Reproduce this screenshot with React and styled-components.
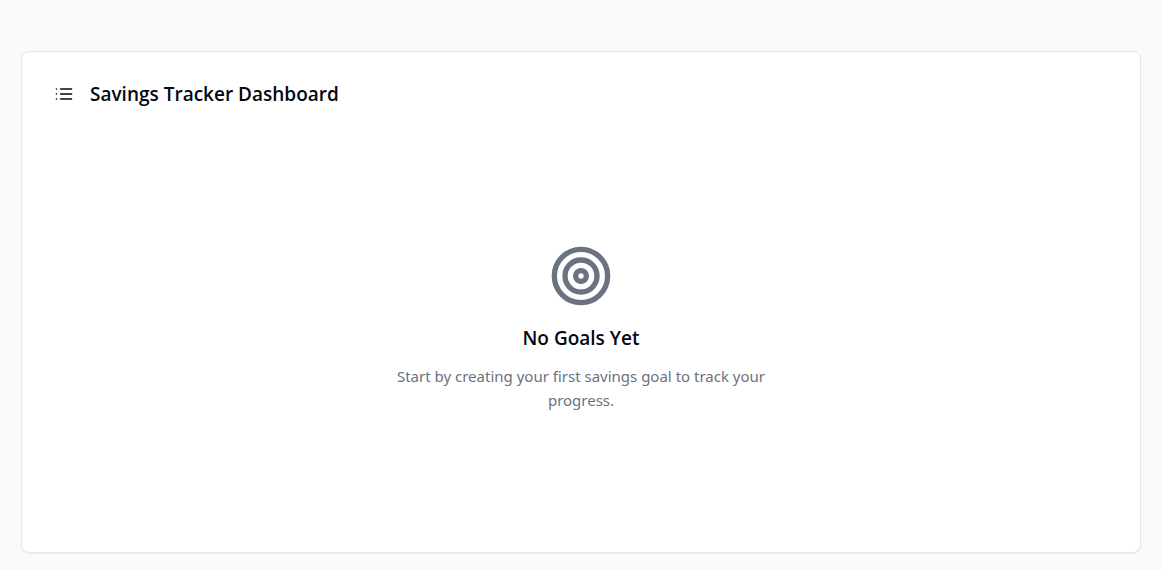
import React from "react";
import styled, { createGlobalStyle } from "styled-components";
import { Target } from "lucide-react";

const GlobalStyle = createGlobalStyle`
  *, *::before, *::after { box-sizing: border-box; }
  body {
    margin: 0;
    background: #fafafa;
    color: #030712;
    font-family: "Noto Sans", "Open Sans", sans-serif;
    font-size: 15px;
    line-height: 24px;
  }
`;

const Page = styled.main`
  display: flex;
  min-height: 100vh;
  padding: 51px 22px 17px 21px;
`;

const Card = styled.section`
  display: flex;
  flex: 1;
  flex-direction: column;
  padding: 28px 32px;
  background: #ffffff;
  border: 1px solid #e5e7eb;
  border-radius: 8px;
  box-shadow: 0 1px 2px rgba(0, 0, 0, 0.05);
`;

const CardHeader = styled.header`
  display: flex;
  align-items: center;
  gap: 16px;
`;

const Heading = styled.h2`
  margin: 0;
  color: #030712;
  font-family: "Open Sans", "Noto Sans", sans-serif;
  font-size: 19px;
  font-weight: 600;
  line-height: 28px;
`;

const EmptyState = styled.div`
  display: flex;
  flex: 1;
  flex-direction: column;
  align-items: center;
  justify-content: center;
  padding-top: 24px;
  color: #6b7280;
  text-align: center;
`;

const EmptyHeading = styled(Heading)`
  margin: 16px 0 12px;
`;

const EmptyText = styled.p`
  max-width: 384px;
  margin: 0;
`;

function ListIcon() {
  return (
    <svg
      width="20"
      height="20"
      viewBox="0 0 24 24"
      fill="none"
      stroke="currentColor"
      strokeWidth="2"
      strokeLinecap="round"
      strokeLinejoin="round"
      aria-hidden="true"
    >
      <path d="M8 6h13M8 12h13M8 18h13M3 6h.01M3 12h.01M3 18h.01" />
    </svg>
  );
}

export default function App() {
  return (
    <>
      <GlobalStyle />
      <Page>
        <Card>
          <CardHeader>
            <ListIcon />
            <Heading as="h1">Savings Tracker Dashboard</Heading>
          </CardHeader>
          <EmptyState>
            <Target size={64} strokeWidth={2} aria-hidden="true" />
            <EmptyHeading>No Goals Yet</EmptyHeading>
            <EmptyText>
              Start by creating your first savings goal to track your progress.
            </EmptyText>
          </EmptyState>
        </Card>
      </Page>
    </>
  );
}
